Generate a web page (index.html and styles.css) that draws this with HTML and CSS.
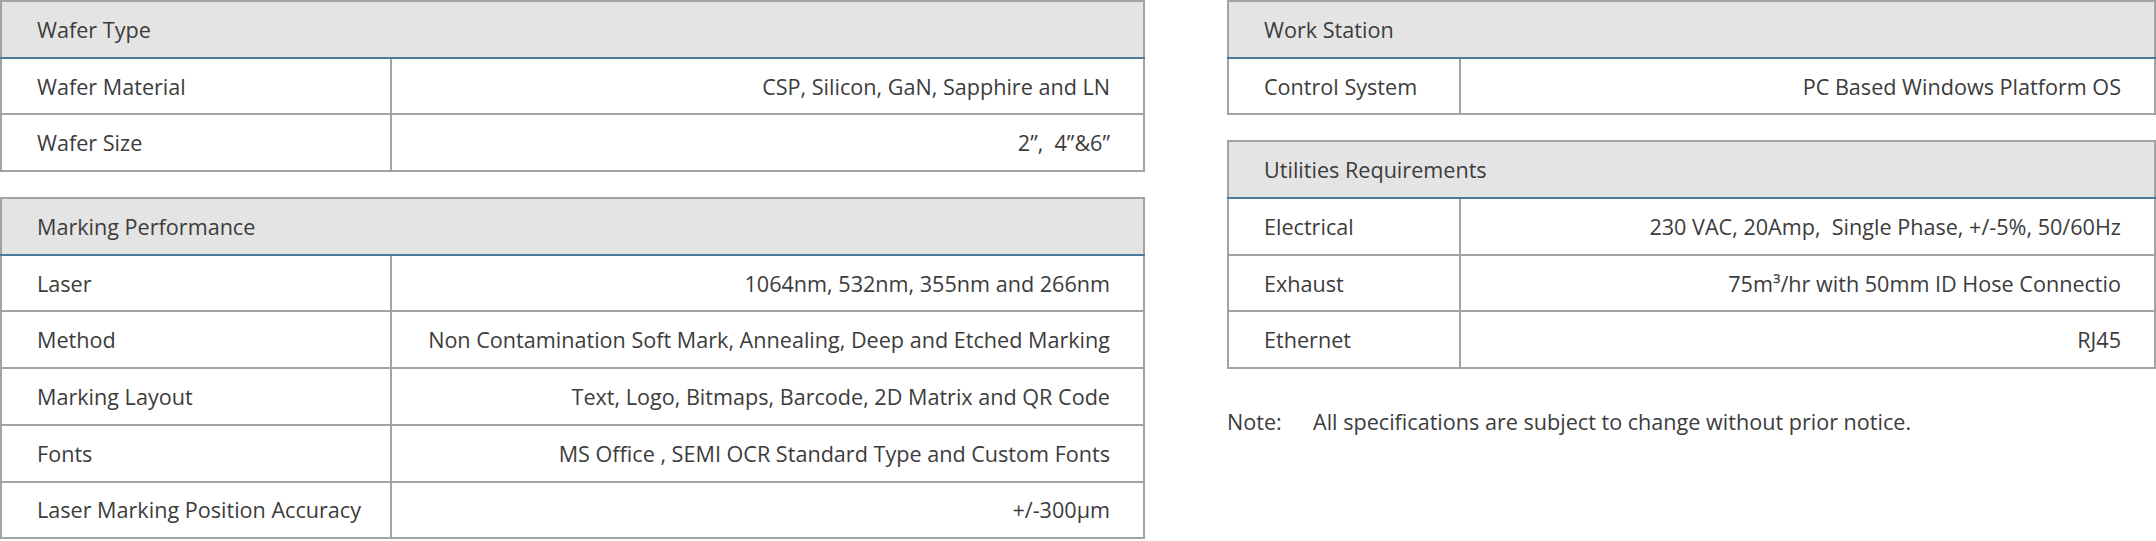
FILE: index.html
```html
<!DOCTYPE html>
<html>
<head>
<meta charset="utf-8">
<link rel="stylesheet" href="styles.css">
</head>
<body>
<div class="page">
  <div class="col col-left">
    <table class="spec">
      <colgroup><col class="c-label"><col></colgroup>
      <tr class="head"><th colspan="2">Wafer Type</th></tr>
      <tr><td class="label">Wafer Material</td><td class="value">CSP, Silicon, GaN, Sapphire and LN</td></tr>
      <tr><td class="label">Wafer Size</td><td class="value">2”,&nbsp; 4”&amp;6”</td></tr>
    </table>
    <table class="spec">
      <colgroup><col class="c-label"><col></colgroup>
      <tr class="head"><th colspan="2">Marking Performance</th></tr>
      <tr><td class="label">Laser</td><td class="value">1064nm, 532nm, 355nm and 266nm</td></tr>
      <tr><td class="label">Method</td><td class="value">Non Contamination Soft Mark, Annealing, Deep and Etched Marking</td></tr>
      <tr><td class="label">Marking Layout</td><td class="value">Text, Logo, Bitmaps, Barcode, 2D Matrix and QR Code</td></tr>
      <tr><td class="label">Fonts</td><td class="value">MS Office , SEMI OCR Standard Type and Custom Fonts</td></tr>
      <tr><td class="label">Laser Marking Position Accuracy</td><td class="value">+/-300µm</td></tr>
    </table>
  </div>
  <div class="col col-right">
    <table class="spec narrow">
      <colgroup><col class="c-label"><col></colgroup>
      <tr class="head"><th colspan="2">Work Station</th></tr>
      <tr><td class="label">Control System</td><td class="value">PC Based Windows Platform OS</td></tr>
    </table>
    <table class="spec narrow">
      <colgroup><col class="c-label"><col></colgroup>
      <tr class="head"><th colspan="2">Utilities Requirements</th></tr>
      <tr><td class="label">Electrical</td><td class="value">230 VAC, 20Amp,&nbsp; Single Phase, +/-5%, 50/60Hz</td></tr>
      <tr><td class="label">Exhaust</td><td class="value">75m³/hr with 50mm ID Hose Connectio</td></tr>
      <tr><td class="label">Ethernet</td><td class="value">RJ45</td></tr>
    </table>
    <p class="note"><span class="note-key">Note:</span>All specifications are subject to change without prior notice.</p>
  </div>
</div>
</body>
</html>
```
FILE: styles.css
```css
html, body {
  margin: 0;
  padding: 0;
  background: #ffffff;
}
body {
  font-family: "Open Sans", "Noto Sans", "Liberation Sans", sans-serif;
  color: #3c3c3c;
  font-size: 21.6px;
}
.page {
  display: flex;
  gap: 82px;
}
.col {
  display: flex;
  flex-direction: column;
  gap: 25px;
}
.col-left {
  width: 1145px;
}
.col-right {
  width: 929px;
  gap: 25px;
}
.spec {
  width: 100%;
  border-collapse: collapse;
  border: 2px solid #a3a3a3;
  table-layout: fixed;
}
.spec col.c-label {
  width: 390px;
}
.spec.narrow col.c-label {
  width: 232px;
}
.spec tr {
  height: 56.7px;
}
.spec th,
.spec td {
  padding: 0 33px 0 35px;
  font-weight: 400;
  vertical-align: middle;
  white-space: nowrap;
}
.spec .head th {
  background: #e4e4e4;
  text-align: left;
  border-bottom: 2px solid #4c7c9c;
}
.spec td {
  border-top: 2px solid #a3a3a3;
}
.spec .head + tr td {
  border-top: none;
}
.spec td.label {
  border-right: 2px solid #a3a3a3;
  text-align: left;
}
.spec td.value {
  text-align: right;
}
.note {
  margin: 13px 0 0 0;
  color: #3c3c3c;
}
.note-key {
  display: inline-block;
  width: 86px;
}
```
